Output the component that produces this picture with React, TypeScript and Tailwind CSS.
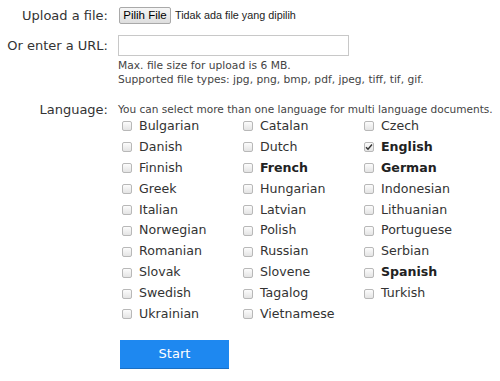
import React from "react";

const langs: { name: string; bold?: boolean; checked?: boolean }[][] = [
  [
    { name: "Bulgarian" },
    { name: "Danish" },
    { name: "Finnish" },
    { name: "Greek" },
    { name: "Italian" },
    { name: "Norwegian" },
    { name: "Romanian" },
    { name: "Slovak" },
    { name: "Swedish" },
    { name: "Ukrainian" },
  ],
  [
    { name: "Catalan" },
    { name: "Dutch" },
    { name: "French", bold: true },
    { name: "Hungarian" },
    { name: "Latvian" },
    { name: "Polish" },
    { name: "Russian" },
    { name: "Slovene" },
    { name: "Tagalog" },
    { name: "Vietnamese" },
  ],
  [
    { name: "Czech" },
    { name: "English", bold: true, checked: true },
    { name: "German", bold: true },
    { name: "Indonesian" },
    { name: "Lithuanian" },
    { name: "Portuguese" },
    { name: "Serbian" },
    { name: "Spanish", bold: true },
    { name: "Turkish" },
  ],
];

function Box({ checked }: { checked?: boolean }) {
  return (
    <span className="w-[10px] h-[10px] rounded-[2px] border border-[#b8b8b8] bg-gradient-to-b from-[#fcfcfc] to-[#e4e4e4] flex items-center justify-center shrink-0">
      {checked && (
        <svg width="8" height="8" viewBox="0 0 8 8">
          <path d="M1 4.2 L3 6.3 L7 1.5" fill="none" stroke="#333" strokeWidth="1.4" />
        </svg>
      )}
    </span>
  );
}

export default function App() {
  return (
    <div
      className="w-[500px] h-[381px] bg-white text-[#333] overflow-hidden"
      style={{ fontFamily: '"DejaVu Sans", Verdana, sans-serif' }}
    >
      <div className="grid grid-cols-[108px_1fr] gap-x-[10px] pt-[7px]">
        {/* Upload */}
        <div className="text-right text-[13px] leading-[17px]">Upload a file:</div>
        <div className="flex items-center h-[17px]">
          <button
            className="h-[17px] w-[52px] ml-[1px] border border-[#a9a9a9] rounded-[2px] bg-gradient-to-b from-[#f6f6f6] to-[#dedede] text-[11.5px] leading-[15px] text-black text-center"
            style={{ fontFamily: '"Liberation Sans", Arial, sans-serif' }}
          >
            Pilih File
          </button>
          <span
            className="ml-[4px] text-[10.8px] text-[#222]"
            style={{ fontFamily: '"Liberation Sans", Arial, sans-serif' }}
          >
            Tidak ada file yang dipilih
          </span>
        </div>

        {/* URL */}
        <div className="text-right text-[13px] leading-[21px] mt-[11px]">Or enter a URL:</div>
        <div className="mt-[11px]">
          <div className="w-[231px] h-[21px] border border-[#c8c8c8] bg-white" />
          <div className="text-[10.7px] leading-[14px] mt-[3px] text-[#444]">
            Max. file size for upload is 6 MB.
            <br />
            Supported file types: jpg, png, bmp, pdf, jpeg, tiff, tif, gif.
          </div>
        </div>

        {/* Language */}
        <div className="text-right text-[13px] leading-[17px] mt-[14px]">Language:</div>
        <div className="mt-[14px]">
          <div className="text-[10.55px] leading-[16px] text-[#444] whitespace-nowrap">
            You can select more than one language for multi language documents.
          </div>
          <div className="flex -mt-[1px]">
            {langs.map((col, ci) => (
              <div key={ci} className="flex flex-col w-[121px]">
                {col.map((l) => (
                  <div key={l.name} className="flex items-center h-[20.9px] pl-[4px]">
                    <Box checked={l.checked} />
                    <span
                      className={`ml-[7px] text-[12.6px] ${l.bold ? "font-bold text-[#222]" : ""}`}
                    >
                      {l.name}
                    </span>
                  </div>
                ))}
              </div>
            ))}
          </div>
          <button className="mt-[15px] ml-[2px] w-[109px] h-[29px] bg-[#1e88f0] text-white text-[13px] border-b border-[#1a6fc4]">
            Start
          </button>
        </div>
      </div>
    </div>
  );
}
